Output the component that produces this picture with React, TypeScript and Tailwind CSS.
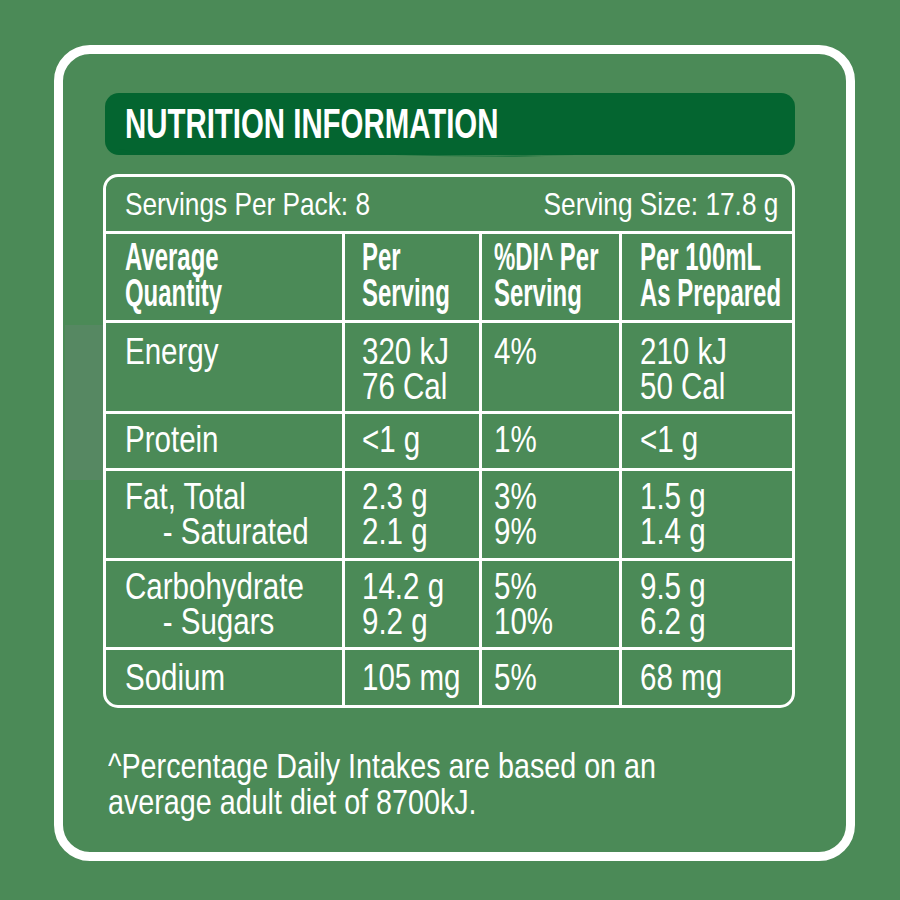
import React from "react";

type Row = {
  h: string;
  pt: string;
  cells: string[][];
};

const colPad = ["pl-[19px]", "pl-[17px]", "pl-[12px]", "pl-[18px]"];

const rows: Row[] = [
  { h: "h-[91px]", pt: "pt-[11px]", cells: [["Energy"], ["320 kJ", "76 Cal"], ["4%"], ["210 kJ", "50 Cal"]] },
  { h: "h-[57px]", pt: "pt-[8px]", cells: [["Protein"], ["<1 g"], ["1%"], ["<1 g"]] },
  { h: "h-[90px]", pt: "pt-[8px]", cells: [["Fat, Total", "- Saturated"], ["2.3 g", "2.1 g"], ["3%", "9%"], ["1.5 g", "1.4 g"]] },
  { h: "h-[89px]", pt: "pt-[8px]", cells: [["Carbohydrate", "- Sugars"], ["14.2 g", "9.2 g"], ["5%", "10%"], ["9.5 g", "6.2 g"]] },
  { h: "h-[58px]", pt: "pt-[10px]", cells: [["Sodium"], ["105 mg"], ["5%"], ["68 mg"]] },
];

const headers = [
  ["Average", "Quantity"],
  ["Per", "Serving"],
  ["%DI^ Per", "Serving"],
  ["Per 100mL", "As Prepared"],
];

export default function App() {
  return (
    <div className="relative w-[900px] h-[900px] bg-[#4b8a57] pt-[45px] pl-[54px] font-['Liberation_Sans',Arial,sans-serif] text-white">
      {/* faint glare on the left */}
      <div className="absolute left-[65px] top-[325px] w-[38px] h-[155px] bg-[#5b8866]/70" />

      <div className="w-[801px] h-[816px] rounded-[36px] border-[9px] border-white pt-[39px] pl-[40px]">
        {/* Title */}
        <div className="relative w-[690px] h-[62px] ml-[2px] rounded-[14px] bg-[#046530] flex items-center pl-[20px]">
          <svg className="absolute left-0 top-[56px]" width="690" height="10" viewBox="0 0 690 10">
            <path
              d="M14 0 L676 0 L672 3 L560 4 L470 5 L420 6.5 L330 5 L250 4.5 L160 4 L80 4 L30 3 Z"
              fill="#046530"
            />
            <path d="M250 5 L330 6 L420 7 L470 6 L410 8 L330 7 Z" fill="#046530" opacity="0.6" />
          </svg>
          <span className="inline-block origin-left scale-x-[0.7] text-[42px] leading-none font-bold whitespace-nowrap">
            NUTRITION INFORMATION
          </span>
        </div>

        {/* Table */}
        <div className="mt-[19px] w-[692px] rounded-[15px] border-[3px] border-white overflow-hidden">
          <div className="h-[54px] flex justify-between pl-[19px] pr-[14px] pt-[10px] text-[32px] leading-[34px] whitespace-nowrap">
            <span className="inline-block origin-left scale-x-[0.82]">Servings Per Pack: 8</span>
            <span className="inline-block origin-right scale-x-[0.82]">Serving Size: 17.8 g</span>
          </div>

          <div className="h-[89px] grid grid-cols-[236px_137px_140px_1fr] border-t-[3px] border-white">
            {headers.map((lines, i) => (
              <div key={i} className={`${colPad[i]} pt-[5px] ${i > 0 ? "border-l-[3px] border-white" : ""}`}>
                {lines.map((l) => (
                  <div key={l} className="w-0 origin-left scale-x-[0.63] text-[38px] leading-[36px] font-bold whitespace-nowrap">
                    {l}
                  </div>
                ))}
              </div>
            ))}
          </div>

          {rows.map((r, ri) => (
            <div key={ri} className={`${r.h} grid grid-cols-[236px_137px_140px_1fr] border-t-[3px] border-white`}>
              {r.cells.map((lines, i) => (
                <div key={i} className={`${colPad[i]} ${r.pt} ${i > 0 ? "border-l-[3px] border-white" : ""}`}>
                  {lines.map((l) => (
                    <div key={l} className="w-0 origin-left scale-x-[0.82] text-[36px] leading-[35px] whitespace-nowrap">
                      {l.startsWith("- ") ? <span className="pl-[46px]">{l}</span> : l}
                    </div>
                  ))}
                </div>
              ))}
            </div>
          ))}
        </div>

        {/* Footnote */}
        <p className="mt-[40px] ml-[5px] origin-left scale-x-[0.82] text-[35px] leading-[36px] whitespace-nowrap">
          ^Percentage Daily Intakes are based on an
          <br />
          average adult diet of 8700kJ.
        </p>
      </div>
    </div>
  );
}
